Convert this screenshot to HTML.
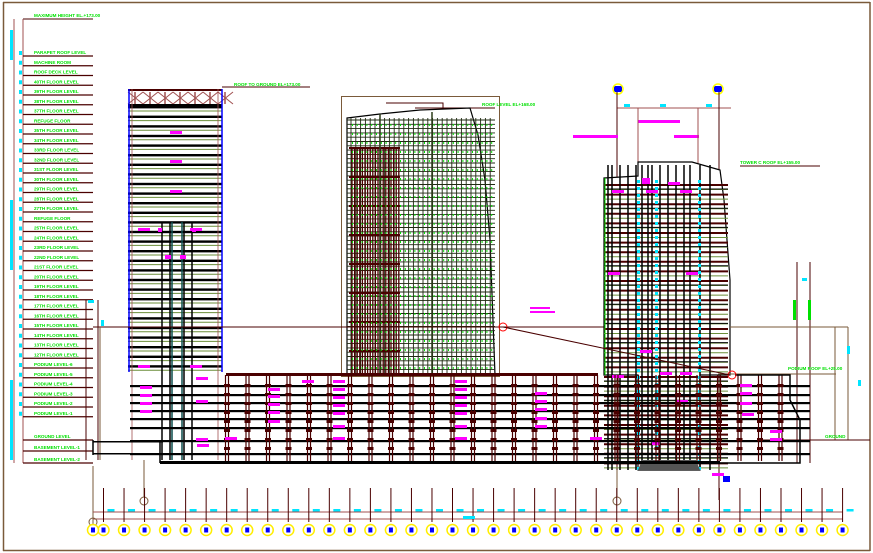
<!DOCTYPE html>
<html><head><meta charset="utf-8"><style>
html,body{margin:0;padding:0;background:#fff;width:873px;height:553px;overflow:hidden}
svg{display:block}
text{font-family:"Liberation Sans",sans-serif;font-size:4.6px;font-weight:bold}
</style></head><body>
<svg id="s" width="873" height="553" viewBox="0 0 873 553" xmlns="http://www.w3.org/2000/svg">
<rect x="0" y="0" width="873" height="553" fill="#fff"/>
</svg>
<script>
const s=document.getElementById('s');const NS='http://www.w3.org/2000/svg';
function el(t,a,txt){const e=document.createElementNS(NS,t);for(const k in a)e.setAttribute(k,a[k]);if(txt)e.textContent=txt;s.appendChild(e);return e;}
function L(x1,y1,x2,y2,c,w){el('line',{x1,y1,x2,y2,stroke:c||'#4a0000','stroke-width':w||1});}
function R(x,y,w,h,f){el('rect',{x,y,width:w,height:h,fill:f});}
function RS(x,y,w,h,c,sw){el('rect',{x,y,width:w,height:h,fill:'none',stroke:c,'stroke-width':sw||1});}
function T(x,y,t,c){el('text',{x,y,fill:c||'#00e000'},t);}
const DR='#4a0000',BR='#7a5a3a',G='#00e000',MG='#ff00ff',CY='#00e5ff',OL='#6b8e3a',BL='#0000ff';
L(3,2.5,870,2.5,BR,1.5);L(3.5,2,3.5,551,BR,1.5);L(870,2,870,551,BR,1.5);L(3,550.5,870,550.5,BR,1.5);
const names=['PARAPET ROOF LEVEL','MACHINE ROOM','ROOF DECK LEVEL','40TH FLOOR LEVEL','39TH FLOOR LEVEL','38TH FLOOR LEVEL','37TH FLOOR LEVEL','REFUGE FLOOR','35TH FLOOR LEVEL','34TH FLOOR LEVEL','33RD FLOOR LEVEL','32ND FLOOR LEVEL','31ST FLOOR LEVEL','30TH FLOOR LEVEL','29TH FLOOR LEVEL','28TH FLOOR LEVEL','27TH FLOOR LEVEL','REFUGE FLOOR','25TH FLOOR LEVEL','24TH FLOOR LEVEL','23RD FLOOR LEVEL','22ND FLOOR LEVEL','21ST FLOOR LEVEL','20TH FLOOR LEVEL','19TH FLOOR LEVEL','18TH FLOOR LEVEL','17TH FLOOR LEVEL','16TH FLOOR LEVEL','15TH FLOOR LEVEL','14TH FLOOR LEVEL','13TH FLOOR LEVEL','12TH FLOOR LEVEL','PODIUM LEVEL-6','PODIUM LEVEL-5','PODIUM LEVEL-4','PODIUM LEVEL-3','PODIUM LEVEL-2','PODIUM LEVEL-1'];
L(23,19,93,19,DR,1);T(34,17,'MAXIMUM HEIGHT  EL.+173.00');
L(14,19,14,463,'#a05050',1);L(23,19,23,463,'#a05050',1);
for(let i=0;i<names.length;i++){const y=56+i*9.75;L(23,y,93,y,DR,1.2);T(34,y-2,names[i]);R(19,y-5,3,4,CY);}
[440,451,463].forEach((y,i)=>{L(23,y,93,y,DR,1.2);T(34,y-2,['GROUND LEVEL','BASEMENT LEVEL-1','BASEMENT LEVEL-2'][i]);});
R(10,30,3,30,CY);R(10,200,3,70,CY);R(10,380,3,80,CY);
L(86,300,86,460,DR,1);L(98,300,98,460,DR,1);R(88,300,6,3,CY);R(101,320,3,6,CY);
const lx=128,rx=222;
R(lx,89,rx-lx,2,DR);
for(let x=lx;x<rx;x+=15){L(x,92,x+15,104,'#a05050',1);L(x+15,92,x,104,'#a05050',1);L(x+7,92,x+7,104,'#a05050',1.5);}
R(lx,104,rx-lx,2.5,'#000');
for(let y=106;y<372;y+=9.6){R(lx,y,rx-lx,2.4,'#000');L(lx,y+5,rx,y+5,OL,1);}
L(lx+1,89,lx+1,372,BL,1.5);L(rx,89,rx,372,BL,1.5);
L(lx+4,89,lx+4,460,'#a05050',0.8);L(rx-4,89,rx-4,460,'#a05050',0.8);
L(162,222,162,460,'#000',1.5);L(192,222,192,460,'#000',1.5);
L(170,222,170,460,'#000',1.5);L(184,222,184,460,'#000',1.5);
L(172,222,172,460,'#0b4d4d',1.5);L(182,222,182,460,'#0b4d4d',1.5);
[[170,131],[170,160],[170,190],[138,228],[190,228],[138,365],[190,365]].forEach(p=>R(p[0],p[1],12,3,MG));
R(158,228,4,4,MG);R(192,228,4,4,MG);R(165,255,6,4,MG);R(180,255,6,4,MG);
L(222,87,310,87,DR,1);T(234,86,'ROOF TO GROUND EL+173.00');
RS(341.5,96.5,158,280,BR,1);
el('polyline',{points:'386,103 443,103 443,112',fill:'none',stroke:DR});L(415,108,495,108,DR,1);T(482,106,'ROOF LEVEL EL+168.00');
el('polygon',{points:'347,118 380,114 420,110 470,108 478,135 485,180 490,240 495,375 347,375',fill:'#fff',stroke:'#000','stroke-width':1.2});
for(let y=120;y<375;y+=4.3)L(347,y,495,y,'#1f2a10',0.9);
for(let x=351;x<495;x+=4.8)L(x,118,x,375,'#1f2a10',0.9);
for(let x=352;x<400;x+=2.6)L(x,147,x,375,DR,1.3);
for(let y=147;y<375;y+=29)R(349,y,51,2,DR);
for(let x=352;x<495;x+=4.8)for(let y=124;y<375;y+=9)R(x,y,1,2,G);
L(380,114,380,375,'#2d3d1a',1.5);L(432,112,432,375,'#2d3d1a',1.5);
L(93,327,735,327,DR,1);L(100,327,100,460,BR,1);
R(614,86,8,6,BL);el('circle',{cx:618,cy:89,r:5,fill:'none',stroke:'yellow','stroke-width':1.5});
R(714,86,8,6,BL);el('circle',{cx:718,cy:89,r:5,fill:'none',stroke:'yellow','stroke-width':1.5});
L(617,108,731,108,'#a05050',1);R(624,104,6,3,CY);R(660,104,6,3,CY);R(706,104,6,3,CY);
L(617,92,617,470,DR,1);L(719,92,719,500,DR,1);
R(638,120,42,3,MG);R(573,135,45,3,MG);R(674,135,25,3,MG);
L(638,108,638,162,'#a05050',1);L(698,108,698,165,'#a05050',1);
L(740,166,820,166,DR,1);T(740,164,'TOWER C ROOF EL+155.00',G);
el('polygon',{points:'604,178 638,176 638,162 692,162 720,170 724,200 730,280 730,375 700,375 700,470 638,470 638,375 604,375',fill:'#fff',stroke:'#000','stroke-width':1.2});
for(let y=185;y<470;y+=9.6){L(604,y,728,y,DR,2);L(604,y+4.5,728,y+4.5,OL,1);}
for(let y=189;y<470;y+=19.2)L(604,y,728,y,'#000',1);
[608,612,620,628,636,642,648,652,660,668,676,684,690,700,710].forEach(x=>L(x,165,x,470,'#000',1.5));
for(let y=180;y<470;y+=7){R(637,y,3,3,CY);R(655,y,3,3,CY);R(698,y,3,3,CY);}
L(605,178,605,375,G,1);
[[612,190],[646,190],[668,182],[680,190],[640,350],[660,372],[612,375],[680,372],[676,400],[608,272],[686,272]].forEach(p=>R(p[0],p[1],12,3,MG));
R(642,178,8,6,MG);R(652,440,8,5,MG);R(712,473,12,3,MG);R(723,476,7,6,BL);
el('polygon',{points:'638,470 700,470 696,460 642,460',fill:'#555'});
L(797,262,797,463,DR,1);L(810,262,810,463,DR,1);R(802,278,5,3,CY);R(793,300,3,20,G);R(808,300,3,20,G);
L(730,327,848,327,BR,1);L(848,327,848,440,BR,1);L(835,327,835,440,BR,1);R(847,346,3,8,CY);R(858,380,3,6,CY);
L(718,374,836,374,BR,1);T(788,370,'PODIUM ROOF EL+25.00');L(760,440,870,440,DR,1);T(825,438,'GROUND');
R(226,373,372,3,DR);
[385,394,402,410,418,427,440,453].forEach(y=>R(130,y,680,2.2,'#000'));
R(160,461,560,3,'#000');R(93,441,70,1.5,'#000');R(93,453,70,1.5,'#000');L(93,440,93,455,'#000',1.5);
L(160,441,160,463,'#000',1.5);
for(let x=227;x<800;x+=20.5){L(x-1.5,375,x-1.5,461,DR,1.2);L(x+1.5,375,x+1.5,461,DR,1.2);}
for(let x=227;x<800;x+=20.5)for(let y=385;y<455;y+=9)R(x-3,y-1,6,3,DR);
[[268,388],[268,395],[268,403],[268,411],[268,420],[455,380],[455,388],[455,396],[455,404],[455,412],[455,425],[455,437],[535,392],[535,400],[535,408],[535,417],[535,425],[333,380],[333,388],[333,396],[333,404],[333,412],[333,425],[333,437],[302,380],[140,386],[140,394],[140,402],[140,410],[196,377],[196,400],[196,438],[225,437],[740,384],[740,392],[740,402],[742,413],[770,430],[770,438],[590,437],[197,444]].forEach(p=>R(p[0],p[1],12,3,MG));
el('polyline',{points:'735,375 790,375 790,400 800,420 800,463 720,463',fill:'none',stroke:'#000','stroke-width':1.5});
el('circle',{cx:503,cy:327,r:4,fill:'none',stroke:'red'});el('circle',{cx:732,cy:375,r:4,fill:'none',stroke:'red'});
L(503,327,730,375,DR,1);R(530,307,20,2,MG);R(530,311,25,2,MG);
L(93,466,93,530,BR,1);
L(93,512,843,512,'#a05050',1);L(93,519,843,519,'#a05050',1);
el('circle',{cx:144,cy:501,r:4,fill:'none',stroke:BR});el('circle',{cx:617,cy:501,r:4,fill:'none',stroke:BR});
L(144,460,144,497,BR,1);L(617,470,617,497,BR,1);
el('circle',{cx:93,cy:522,r:4,fill:'none',stroke:BR});
for(let i=0;i<37;i++){const x=103.5+i*20.53;L(x,488,x,522,DR,1);
 R(x+4,509,7,2.5,CY);
 el('circle',{cx:x,cy:530,r:5.5,fill:'#fff',stroke:'#ffee00','stroke-width':1.5});R(x-2,527.5,4,5,BL);}
R(463,516,12,3,CY);
el('circle',{cx:93,cy:530,r:5.5,fill:'#fff',stroke:'#ffee00','stroke-width':1.5});R(91,527.5,4,5,BL);
</script>
</body></html>
